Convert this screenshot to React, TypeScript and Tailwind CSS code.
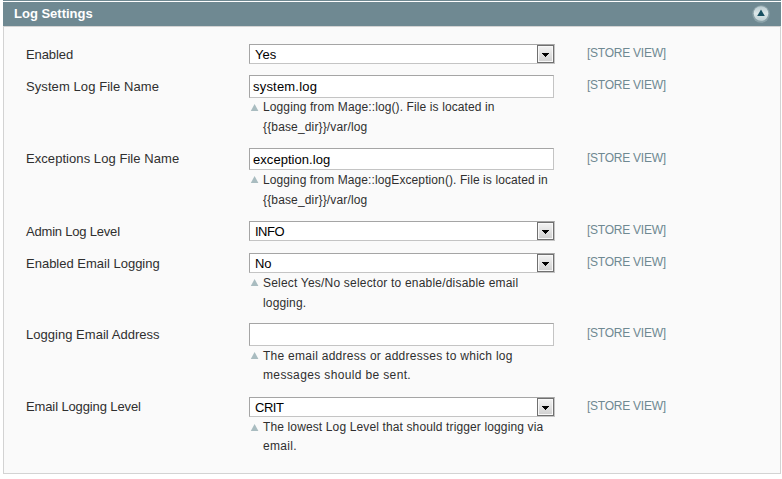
type HintLine = { text: string; tracking: string };

type Field = {
  label: string;
  labelTracking: string;
  kind: 'select' | 'input';
  value: string;
  valueTracking: string;
  inputHeight?: string;
  hint?: HintLine[];
  hintLayout?: string;
  markOffset?: string;
  height: string;
  labelPad: string;
};

const fields: Field[] = [
  {
    label: 'Enabled', labelTracking: 'tracking-[-0.1px]', kind: 'select', value: 'Yes', valueTracking: 'tracking-normal',
    height: 'h-8', labelPad: 'pt-[2px]',
  },
  {
    label: 'System Log File Name', labelTracking: 'tracking-[0.08px]', kind: 'input', value: 'system.log', valueTracking: 'tracking-[0.2px]',
    inputHeight: 'h-[23px]', height: 'h-[73px]', labelPad: 'pt-[2px]', hintLayout: '-mt-px leading-[20px]', markOffset: 'mt-px',
    hint: [
      { text: 'Logging from Mage::log(). File is located in', tracking: 'tracking-[0.11px]' },
      { text: '{{base_dir}}/var/log', tracking: 'tracking-[0.15px]' },
    ],
  },
  {
    label: 'Exceptions Log File Name', labelTracking: 'tracking-[0.06px]', kind: 'input', value: 'exception.log', valueTracking: 'tracking-[0.05px]',
    inputHeight: 'h-[22px]', height: 'h-[72px]', labelPad: 'pt-[1px]', hintLayout: 'leading-[20px]',
    hint: [
      { text: 'Logging from Mage::logException(). File is located in', tracking: 'tracking-[0.1px]' },
      { text: '{{base_dir}}/var/log', tracking: 'tracking-[0.15px]' },
    ],
  },
  {
    label: 'Admin Log Level', labelTracking: 'tracking-[-0.2px]', kind: 'select', value: 'INFO', valueTracking: 'tracking-[-0.5px]',
    height: 'h-8', labelPad: 'pt-[2px]',
  },
  {
    label: 'Enabled Email Logging', labelTracking: 'tracking-[0px]', kind: 'select', value: 'No', valueTracking: 'tracking-[-0.2px]',
    height: 'h-[71px]', labelPad: 'pt-[2px]', hintLayout: 'leading-[20px]',
    hint: [
      { text: 'Select Yes/No selector to enable/disable email', tracking: 'tracking-[0.2px]' },
      { text: 'logging.', tracking: 'tracking-[0.15px]' },
    ],
  },
  {
    label: 'Logging Email Address', labelTracking: 'tracking-[0.03px]', kind: 'input', value: '', valueTracking: 'tracking-normal',
    inputHeight: 'h-[23px]', height: 'h-[73px]', labelPad: 'pt-[2px]', hintLayout: 'pt-px leading-[19px]', markOffset: '-mt-px',
    hint: [
      { text: 'The email address or addresses to which log', tracking: 'tracking-[0.27px]' },
      { text: 'messages should be sent.', tracking: 'tracking-[0.36px]' },
    ],
  },
  {
    label: 'Email Logging Level', labelTracking: 'tracking-[-0.12px]', kind: 'select', value: 'CRIT', valueTracking: 'tracking-[-0.5px]',
    height: 'h-[70px]', labelPad: 'pt-[1px]', hintLayout: 'pt-px leading-[19px]',
    hint: [
      { text: 'The lowest Log Level that should trigger logging via', tracking: 'tracking-[0.13px]' },
      { text: 'email.', tracking: 'tracking-[0.3px]' },
    ],
  },
];

function Select({ field }: { field: Field }) {
  return (
    <div className="mt-px flex h-5 w-[306px] border border-[#c4c4c4] border-t-[#a5a5a5] border-l-[#a5a5a5] bg-white">
      <span className={`grow pl-[5px] text-[13px] leading-[19px] text-black ${field.valueTracking}`}>{field.value}</span>
      <span className="flex h-[18px] w-[17px] items-center justify-center border border-[#707070] bg-linear-to-b from-[#f3f3f3] to-[#cfcfcf] shadow-[inset_0_0_0_1px_#f8f8f8]">
        <svg width="7" height="4" viewBox="0 0 7 4" shapeRendering="crispEdges" className="mt-[2px]">
          <path d="M0 0h7v1H6v1H5v1H4v1H3V3H2V2H1V1H0z" fill="#000" />
        </svg>
      </span>
    </div>
  );
}

function Input({ field }: { field: Field }) {
  return (
    <div className={`w-[305px] border border-[#c4c4c4] border-t-[#a5a5a5] border-l-[#a5a5a5] bg-white pl-[3px] text-[13px] leading-[21px] text-black ${field.inputHeight} ${field.valueTracking}`}>
      {field.value}
    </div>
  );
}

function Hint({ field }: { field: Field }) {
  return (
    <div className={`flex text-[12px] text-[#2f2f2f] ${field.hintLayout}`}>
      <svg width="14" height="19" viewBox="0 0 14 19" className={`shrink-0 ${field.markOffset ?? ''}`}>
        <path d="M5.6 6L9.4 13H1.8z" fill="#a9bcc0" />
      </svg>
      <div className="whitespace-nowrap">
        {field.hint?.map((line) => <div key={line.text} className={line.tracking}>{line.text}</div>)}
      </div>
    </div>
  );
}

export default function App() {
  return (
    <main className="h-[479px] w-[782px] overflow-hidden bg-white pl-[3px] font-['Liberation_Sans',Arial,sans-serif]">
      <div className="h-px w-[778px] bg-[#6f8992]" />
      <header className="mt-px flex h-6 w-[778px] items-center justify-between bg-[#6f8992] pr-[11px] pl-[11px]">
        <h1 className="text-[13px] leading-6 font-bold tracking-[0px] text-white">Log Settings</h1>
        <svg width="18" height="20" viewBox="0 0 18 20">
          <defs>
            <linearGradient id="knob" x1="0" y1="0" x2="0" y2="1">
              <stop offset="0" stopColor="#b9cbd0" />
              <stop offset=".5" stopColor="#dce7e9" />
              <stop offset="1" stopColor="#bfd0d4" />
            </linearGradient>
          </defs>
          <circle cx="9" cy="10" r="8.7" fill="#8ba2a9" />
          <circle cx="9" cy="9.5" r="7.3" fill="url(#knob)" />
          <path d="M9 5.5L12.8 12H5.2z" fill="#174f60" />
        </svg>
      </header>
      <section className="h-[448px] w-[778px] border border-[#d3d3d3] bg-[#fafafa] pt-4 pl-[22px]">
        {fields.map((field) => (
          <div key={field.label} className={`flex ${field.height}`}>
            <div className={`w-[223px] text-[13px] leading-[19px] text-[#2f2f2f] ${field.labelTracking} ${field.labelPad}`}>{field.label}</div>
            <div className="w-[338px]">
              {field.kind === 'select' ? <Select field={field} /> : <Input field={field} />}
              {field.hint && <Hint field={field} />}
            </div>
            <div className="pt-px text-[12px] leading-[19px] tracking-[-0.25px] text-[#6f8992]">[STORE VIEW]</div>
          </div>
        ))}
      </section>
    </main>
  );
}
